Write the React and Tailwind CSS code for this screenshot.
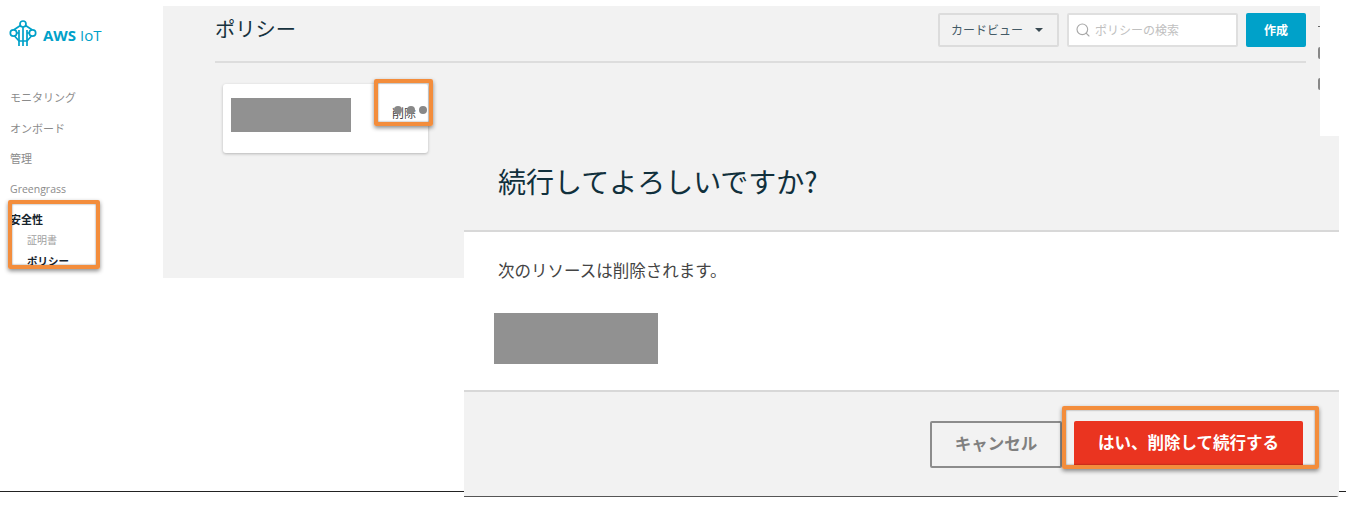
import React from 'react'
import { Search } from 'lucide-react'

const jp = 'font-["Noto_Sans_CJK_JP","Noto_Sans",sans-serif]'

const Logo = () => (
  <svg width="28" height="28" viewBox="0 0 28 28" fill="none" stroke="#00a1c9" strokeWidth="1.700">
    <circle cx="14" cy="5" r="3" />
    <circle cx="4.500" cy="14" r="3.200" />
    <circle cx="23.500" cy="14" r="3.200" />
    <path d="M11.400 6.500 5 10.800M16.600 6.500 23 10.800M5.500 17l4.500 5h8l4.500-5" />
    <path d="M14 8v19M10 11v16M18 11v16M10 14H7.700M18 14h2.300" />
  </svg>
)

const Highlight = ({ className }) => (
  <div className={`absolute border-[4px] border-[#f38d3c] rounded-[2px] shadow-[0_2px_4px_rgba(0,0,0,0.45),inset_0_0_2px_rgba(0,0,0,0.5)] ${className}`} />
)

const Sidebar = () => (
  <aside className={`w-[163px] shrink-0 text-[11px] text-[#8b8b8b] ${jp}`}>
    <div className="flex items-start gap-[6px] pl-[9px] pt-[19px] h-[82px]">
      <Logo />
      <span className='mt-[6px] leading-[20px] text-[#00a1c9] text-[15px] font-["Open_Sans",sans-serif]'>
        <b className="font-bold">AWS</b> IoT
      </span>
    </div>
    <nav className="pl-[10px] flex flex-col">
      <a className="h-[30.600px] flex items-center">モニタリング</a>
      <a className="h-[30.600px] flex items-center">オンボード</a>
      <a className="h-[30.600px] flex items-center">管理</a>
      <a className="h-[30.600px] pt-[2px] flex items-center text-[10.500px] font-['Open_Sans',sans-serif]">Greengrass</a>
      <a className="h-[30.600px] flex items-center font-bold text-[#16232c]">安全性</a>
      <a className="h-[20px] -mt-[5px] pl-[17px] flex items-center text-[10px] text-[#a0a0a0]">証明書</a>
      <a className="h-[22px] pl-[17px] flex items-center text-[10.500px] font-bold text-[#16232c]">ポリシー</a>
    </nav>
  </aside>
)

const PolicyPanel = () => (
  <main className={`w-[1157px] h-[272px] mt-[6px] bg-[#f2f2f2] pl-[52px] pr-[14px] ${jp}`}>
    <div className="flex items-start h-[57px] pt-[7px] border-b-2 border-[#dddddd]">
      <h1 className="flex-1 mt-[-1px] text-[20.250px] leading-[34px] text-[#17323e]">ポリシー</h1>
      <button className="w-[121px] h-[34px] border-2 border-[#dcdcdc] rounded-[2px] pl-[11px] pr-[14px] flex items-center justify-between text-[12px] text-[#445a66]">
        カードビュー
        <span className="w-0 h-0 border-x-[4px] border-x-transparent border-t-[4px] border-t-[#3a4a52]" />
      </button>
      <div className="w-[171px] h-[34px] ml-[8px] bg-white border-2 border-[#dfdfdf] rounded-[2px] flex items-center pl-[6px] gap-[4px] text-[12px] text-[#c0c0c0]">
        <Search size={16} strokeWidth={1.700} color="#a8a8a8" />
        ポリシーの検索
      </div>
      <button className="w-[60px] h-[34px] ml-[8px] bg-[#00a1c9] rounded-[2px] text-white text-[12px] font-bold">作成</button>
    </div>
    <div className="relative w-[205px] h-[69px] mt-[21px] ml-[8px] bg-white rounded-[3px] shadow-[0_1px_3px_rgba(0,0,0,0.25)] pl-[8px] pt-[14px]">
      <div className="w-[120px] h-[34px] bg-[#919191]" />
      <span className="absolute left-[169px] top-[20px] text-[12px] text-[#444]">削除</span>
      <div className="absolute left-[171px] top-[22px] flex gap-[4.500px]">
        <i className="size-[8px] rounded-full bg-[#888888]" />
        <i className="size-[8px] rounded-full bg-[#888888]" />
        <i className="size-[8px] rounded-full bg-[#888888]" />
      </div>
    </div>
  </main>
)

const ConfirmDialog = () => (
  <section className={`absolute left-[464px] top-[136px] w-[875px] h-[361px] flex flex-col border-b border-[#555] rounded-br-[3px] ${jp}`}>
    <header className="h-[96px] bg-[#f2f2f2] border-b-2 border-[#d8d8d8] pl-[34px] pb-[4px] flex items-center">
      <h2 className="text-[28px] text-[#11303c]">続行してよろしいですか?</h2>
    </header>
    <div className="h-[158px] bg-white pl-[34px] pt-[24px]">
      <p className="text-[16.500px] leading-[28px] text-[#444]">次のリソースは削除されます。</p>
      <div className="w-[164px] h-[51px] -ml-[4px] mt-[29px] bg-[#919191]" />
    </div>
    <footer className="flex-1 bg-[#f2f2f2] border-t-2 border-[#d8d8d8] flex justify-end items-start pt-[29px] pr-[36px] gap-[12px]">
      <button className="w-[132px] h-[47px] pb-[3px] border-2 border-[#8c8c8c] rounded-[2px] text-[16.500px] font-bold text-[#808080]">キャンセル</button>
      <button className="w-[229px] h-[46px] pb-[3px] bg-[#ea3420] rounded-[2px] text-[16.500px] font-bold text-white">はい、削除して続行する</button>
    </footer>
  </section>
)

const App = () => {
  return (
    <div className="relative w-[1346px] h-[505px] overflow-hidden bg-white">
      <div className="flex h-[278px]">
        <Sidebar />
        <PolicyPanel />
        <div className="relative flex-1 bg-white">
          <span className="absolute -left-[2px] top-[26px] w-[2px] h-px bg-[#666]" />
          <span className="absolute -left-[2px] top-[47px] w-[2px] h-[12px] rounded-l-full bg-[#888]" />
          <span className="absolute -left-[2px] top-[78px] w-[2px] h-[12px] rounded-l-full bg-[#888]" />
        </div>
      </div>
      <div className="h-px mt-[213px] bg-[#222]" />
      <ConfirmDialog />
      <Highlight className="left-[8px] top-[200px] w-[92px] h-[69px]" />
      <Highlight className="left-[374px] top-[79px] w-[59px] h-[47px]" />
      <Highlight className="left-[1062px] top-[406px] w-[257px] h-[63px]" />
    </div>
  )
}

export default App
